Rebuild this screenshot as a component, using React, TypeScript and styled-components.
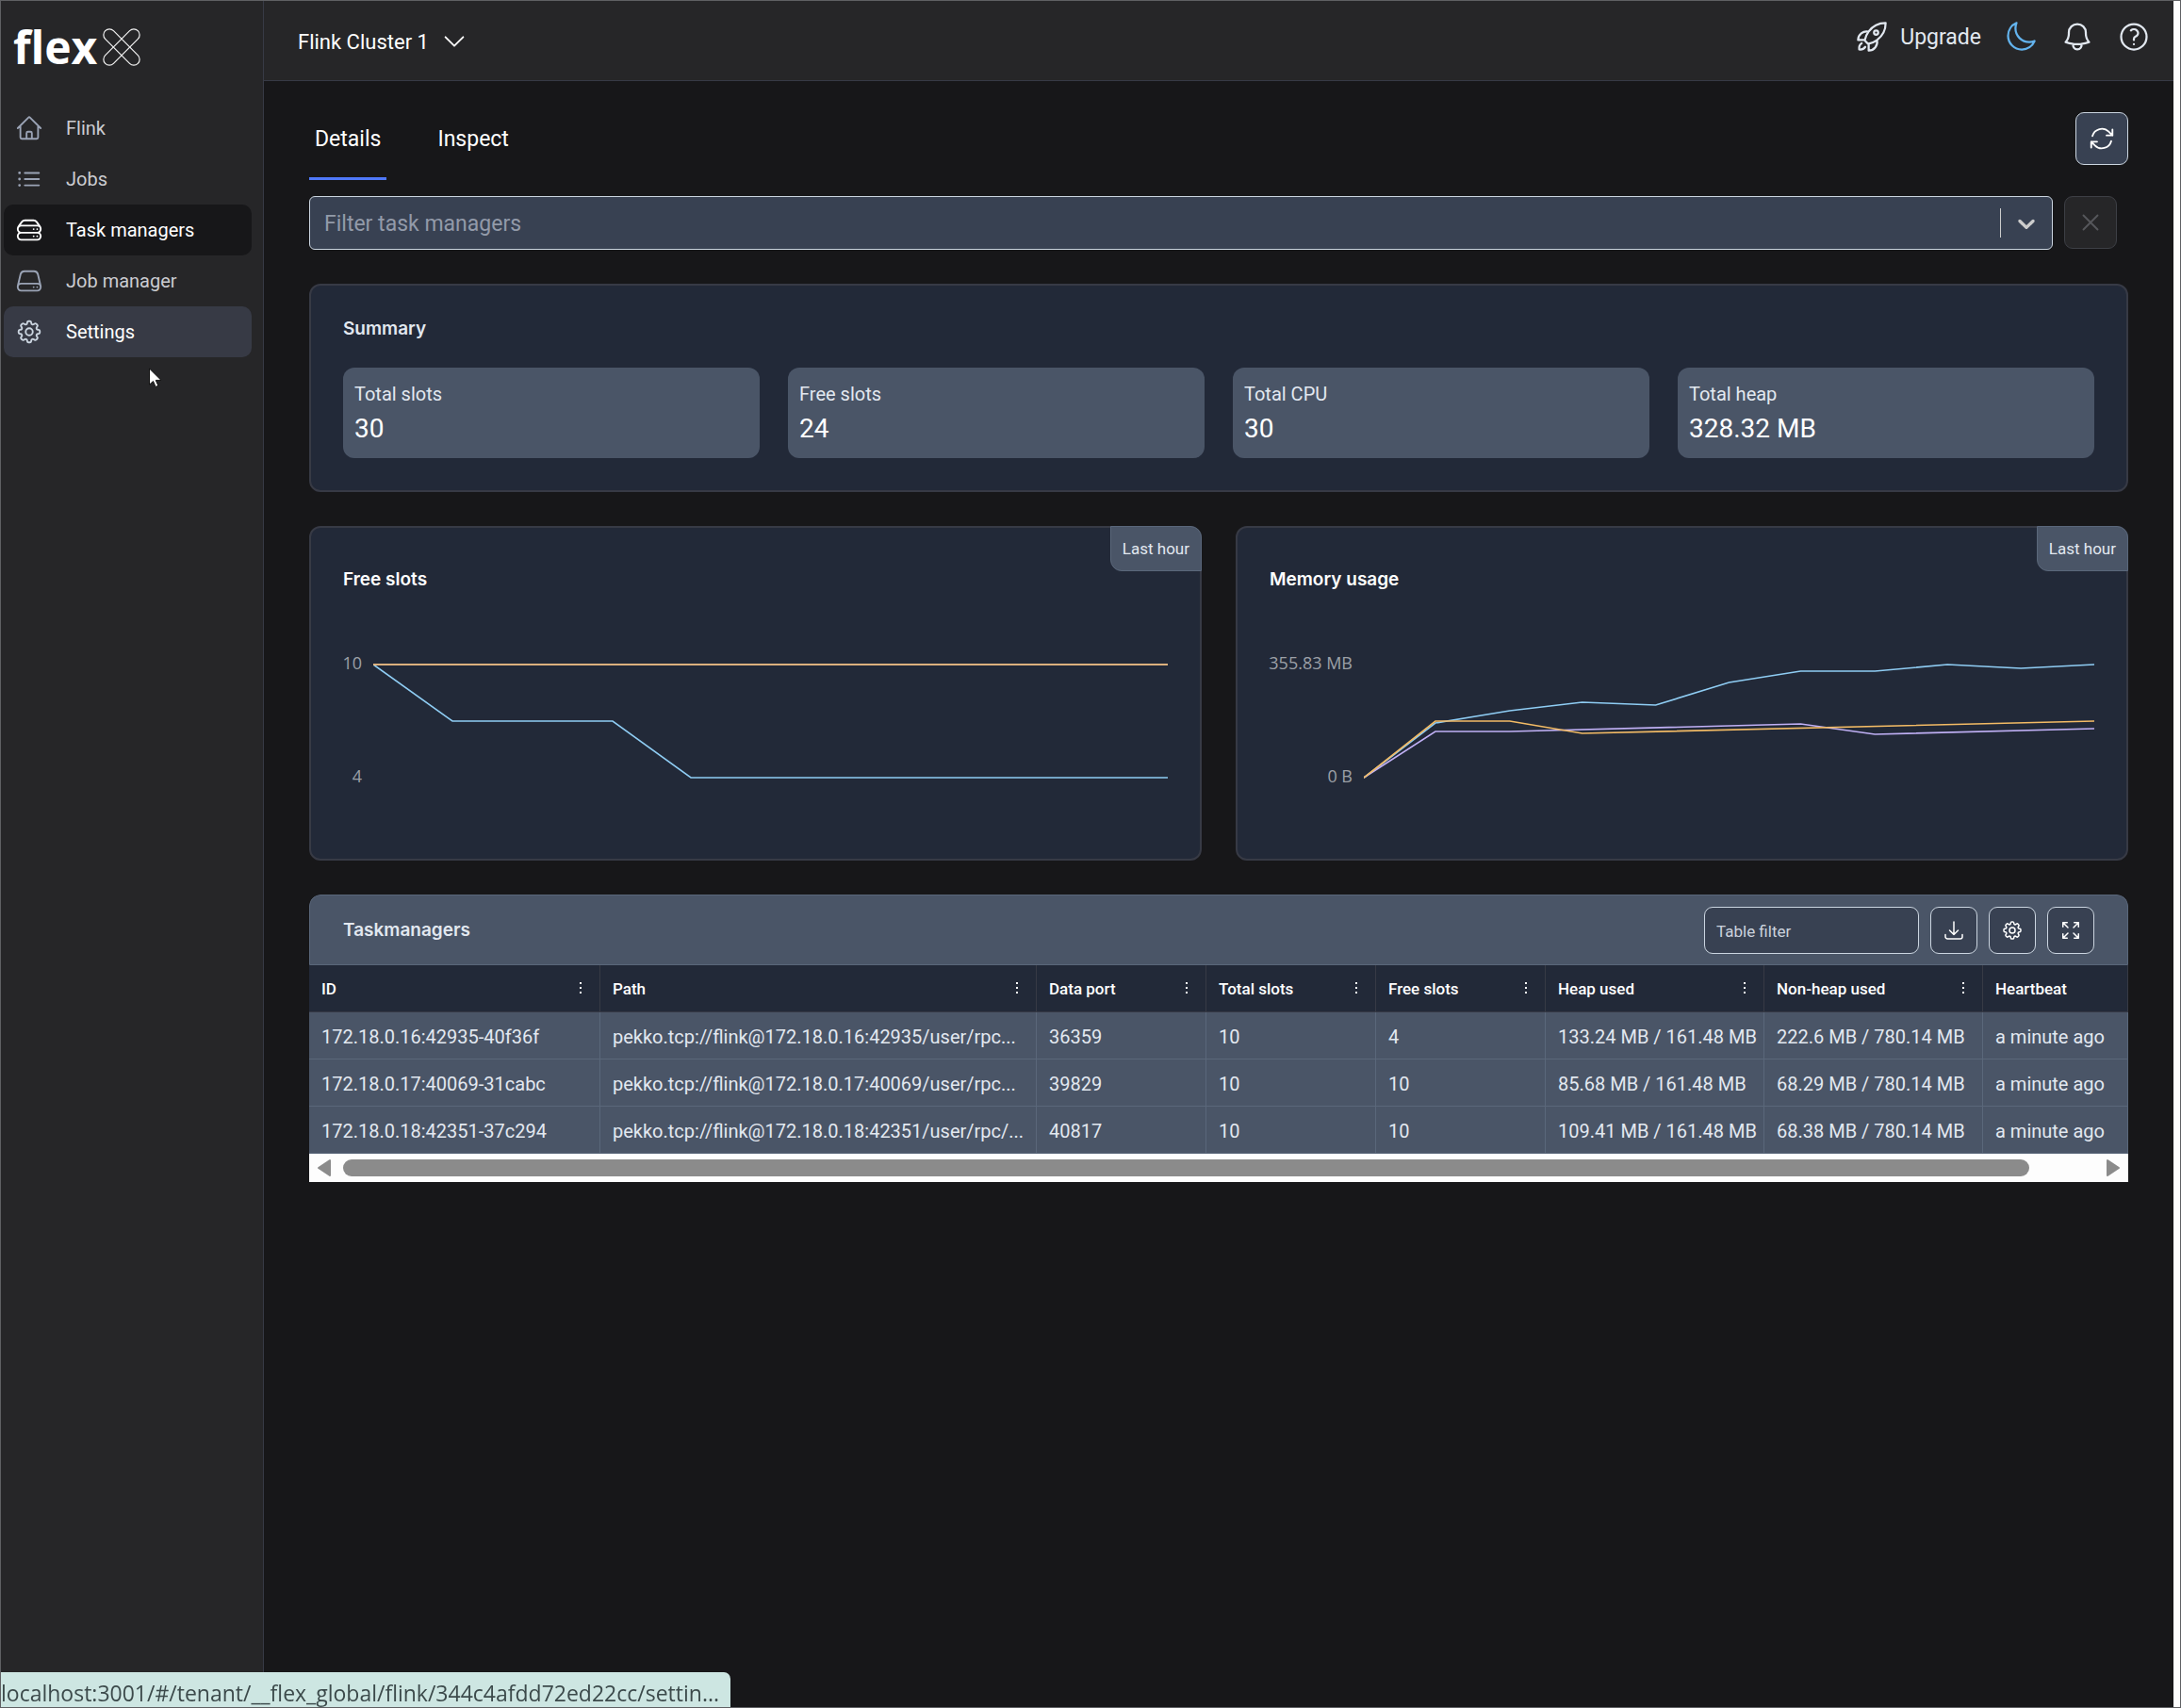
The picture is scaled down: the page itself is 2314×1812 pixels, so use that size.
import React, { useState } from "react";
import styled, { createGlobalStyle, css } from "styled-components";
import {
  HiOutlineHome,
  HiOutlineListBullet,
  HiOutlineServerStack,
  HiOutlineServer,
  HiOutlineCog8Tooth,
  HiOutlineRocketLaunch,
  HiOutlineMoon,
  HiOutlineBell,
  HiOutlineQuestionMarkCircle,
  HiOutlineArrowPath,
  HiOutlineArrowDownTray,
  HiOutlineArrowsPointingOut,
  HiOutlineChevronDown,
  HiOutlineXMark,
} from "react-icons/hi2";

const color = {
  frame: "#5f6063",
  page: "#171719",
  chrome: "#262628",
  hover: "#373a45",
  line: "#373a45",
  card: "#222938",
  tile: "#4a5567",
  tileLine: "#5a677a",
  control: "#384152",
  controlLine: "#cbd5e0",
  text: "#e2e8f0",
  muted: "#cbccd1",
  accent: "#4f78f8",
  blue: "#8fcdf4",
  purple: "#c0b0f5",
  orange: "#f3bb65",
};

const uiFont = `Roboto, "Liberation Sans", sans-serif`;
const titleFont = `Inter, "Open Sans", sans-serif`;
const plainFont = `"Open Sans", "Noto Sans", sans-serif`;

const GlobalStyle = createGlobalStyle`
  *, *::before, *::after { box-sizing: border-box; }
  body { margin: 0; background: ${color.page}; color: #fff; font-family: ${uiFont}; }
  button, input { font: inherit; color: inherit; }
  h2, dl, dd { margin: 0; }
`;

const Window = styled.div`
  display: grid;
  grid-template-columns: 279px minmax(0, 1fr) 7px;
  min-height: 100vh;
  border: 1px solid ${color.frame};
`;

const ScrollGutter = styled.div`
  background: #fdfdfd;
`;

/* Sidebar */

const Sidebar = styled.aside`
  background: ${color.chrome};
  border-right: 1px solid ${color.line};
`;

const Logo = styled.a`
  display: flex;
  align-items: center;
  gap: 6px;
  height: 98px;
  padding: 0 0 0 13px;
  color: #fff;
  text-decoration: none;
`;

const LogoWord = styled.span`
  font: 700 48px/60px "Open Sans", sans-serif;
`;

const NavList = styled.nav`
  display: flex;
  flex-direction: column;
  padding: 10px 12px 0 3px;
`;

const NavItem = styled.a<{ $state?: "active" | "hover" }>`
  display: flex;
  align-items: center;
  gap: 24px;
  height: 54px;
  padding: 0 12px;
  border-radius: 10px;
  color: ${color.muted};
  font-size: 20px;
  text-decoration: none;
  svg { width: 30px; height: 30px; color: #9aa3b5; }
  ${(p) => p.$state === "active" && css`
    background: ${color.page};
    color: #fff;
    svg { color: #fff; }
  `}
  ${(p) => p.$state === "hover" && css`
    background: ${color.hover};
    color: #fff;
    svg { color: ${color.controlLine}; }
  `}
`;

/* Top bar */

const Column = styled.div`
  display: flex;
  flex-direction: column;
  background: ${color.page};
`;

const TopBar = styled.header`
  display: flex;
  align-items: center;
  justify-content: space-between;
  height: 85px;
  padding: 2px 24px 0 36px;
  background: ${color.chrome};
  border-bottom: 1px solid ${color.line};
`;

const PlainButton = styled.button<{ $size?: number; $tint?: string }>`
  display: inline-flex;
  align-items: center;
  gap: 12px;
  padding: 0;
  border: 0;
  background: none;
  color: ${(p) => p.$tint || "#fff"};
  font-size: ${(p) => p.$size || 23}px;
`;

const TopActions = styled.div`
  display: flex;
  align-items: center;
  gap: 24px;
  padding-bottom: 10px;
  svg { width: 36px; height: 36px; }
`;

/* Page body */

const Main = styled.main`
  display: flex;
  flex-direction: column;
  gap: 36px;
  padding: 33px 48px 48px;
`;

const Controls = styled.div`
  display: flex;
  flex-direction: column;
  gap: 17px;
`;

const TabRow = styled.div`
  display: flex;
  justify-content: space-between;
  align-items: flex-start;
`;

const Tabs = styled.div`
  display: flex;
  gap: 48px;
`;

const Tab = styled.button<{ $active?: boolean }>`
  height: 72px;
  padding: 0 6px 12px;
  border: 0;
  border-bottom: 3px solid ${(p) => (p.$active ? color.accent : "transparent")};
  background: none;
  font-size: 23px;
`;

const SquareButton = styled.button<{ $size: number; $quiet?: boolean }>`
  display: inline-flex;
  align-items: center;
  justify-content: center;
  flex: none;
  width: ${(p) => p.$size}px;
  height: ${(p) => p.$size}px;
  padding: 0;
  border: 1px solid ${(p) => (p.$quiet ? "#3d3f45" : color.controlLine)};
  border-radius: 9px;
  background: ${(p) => (p.$quiet ? color.chrome : color.control)};
  color: ${(p) => (p.$quiet ? "#56575b" : "#fff")};
`;

const FilterRow = styled.div`
  display: flex;
  gap: 12px;
  padding-right: 12px;
`;

const Combo = styled.div`
  display: flex;
  align-items: center;
  flex: 1;
  height: 57px;
  border: 1px solid ${color.controlLine};
  border-radius: 6px;
  background: ${color.control};
`;

const ComboInput = styled.input`
  flex: 1;
  min-width: 0;
  height: 100%;
  padding: 2px 15px 0;
  border: 0;
  outline: 0;
  background: none;
  font-size: 23px;
  &::placeholder { color: #929aa9; opacity: 1; }
`;

const ComboToggle = styled.button`
  display: flex;
  align-items: center;
  justify-content: center;
  width: 55px;
  height: 31px;
  padding: 0;
  border: 0;
  border-left: 1px solid #ccc;
  background: none;
  color: #ccc;
`;

const Card = styled.section`
  position: relative;
  padding: 34px;
  border: 2px solid ${color.line};
  border-radius: 12px;
  background: ${color.card};
`;

const CardTitle = styled.h2<{ $bright?: boolean }>`
  font: 600 19px/24px ${titleFont};
  color: ${(p) => (p.$bright ? "#fff" : color.text)};
`;

const Tiles = styled.dl`
  display: grid;
  grid-template-columns: repeat(4, minmax(0, 1fr));
  gap: 30px;
  margin-top: 29px;
`;

const Tile = styled.div`
  height: 96px;
  padding: 15px 12px;
  border-radius: 12px;
  background: ${color.tile};
`;

const TileLabel = styled.dt`
  font-size: 20px;
  line-height: 26px;
  color: ${color.text};
`;

const TileValue = styled.dd`
  font-size: 28px;
  line-height: 48px;
`;

const Charts = styled.div`
  display: grid;
  grid-template-columns: repeat(2, minmax(0, 1fr));
  gap: 36px;
`;

const ChartPanel = styled(Card)`
  padding-top: 43px;
`;

const RangeBadge = styled.span`
  position: absolute;
  top: -2px;
  right: -2px;
  padding: 0 12px;
  border: 1px solid ${color.tileLine};
  border-radius: 0 12px 0 12px;
  background: ${color.tile};
  color: ${color.text};
  font-size: 17px;
  line-height: 46px;
`;

const Plot = styled.div<{ $axis: number }>`
  display: grid;
  grid-template-columns: ${(p) => p.$axis}px minmax(0, 1fr);
  column-gap: 12px;
  height: 124px;
  margin: 76px 0 50px;
`;

const Axis = styled.div`
  display: flex;
  flex-direction: column;
  justify-content: space-between;
  align-items: flex-end;
  margin: -10px 0 -6px;
  color: #9ca0a7;
  font: 18px/20px ${plainFont};
  white-space: nowrap;
`;

const Lines = styled.svg`
  display: block;
  width: 100%;
  height: 124px;
  polyline { fill: none; stroke-width: 1.6; vector-effect: non-scaling-stroke; }
`;

/* Table */

const TablePanel = styled.section`
  border-radius: 12px 12px 0 0;
  overflow: hidden;
`;

const TableBar = styled.div`
  display: flex;
  align-items: center;
  justify-content: space-between;
  height: 75px;
  padding: 0 35px;
  border: 1px solid ${color.tileLine};
  border-radius: 12px 12px 0 0;
  background: ${color.tile};
`;

const TableTools = styled.div`
  display: flex;
  gap: 12px;
`;

const TableFilter = styled.input`
  width: 228px;
  height: 50px;
  padding: 2px 12px 0;
  border: 1px solid ${color.controlLine};
  border-radius: 9px;
  background: ${color.control};
  font-size: 17px;
  &::placeholder { color: #cbd2dd; opacity: 1; }
`;

const Grid = styled.table`
  width: 100%;
  table-layout: fixed;
  border-collapse: separate;
  border-spacing: 0;
`;

const HeadCell = styled.th`
  height: 50px;
  padding: 0 12px 0 13px;
  border-right: 1px solid ${color.line};
  border-bottom: 1px solid ${color.line};
  background: ${color.card};
  font-size: 17px;
  font-weight: 500;
  text-align: left;
`;

const HeadContent = styled.div`
  display: flex;
  align-items: center;
  justify-content: space-between;
`;

const MenuButton = styled.button`
  display: flex;
  padding: 0 6px;
  border: 0;
  background: none;
`;

const Cell = styled.td`
  height: 50px;
  padding: 2px 0 0 13px;
  border-right: 1px solid ${color.tileLine};
  border-bottom: 1px solid ${color.tileLine};
  background: ${color.tile};
  color: ${color.text};
  font-size: 20px;
  white-space: nowrap;
`;

const ScrollBar = styled.div`
  display: flex;
  align-items: center;
  gap: 12px;
  height: 30px;
  padding: 0 8px;
  background: #fdfdfd;
  color: #8b8b8b;
`;

const ScrollTrack = styled.div`
  display: flex;
  flex: 1;
  height: 18px;
`;

const ScrollThumb = styled.div`
  width: calc(100% - 69px);
  border-radius: 9px;
  background: #8b8b8b;
`;

/* Browser overlays */

const StatusBubble = styled.div`
  position: fixed;
  left: 1px;
  bottom: 1px;
  height: 37px;
  padding: 4px 12px 0 0;
  border-radius: 0 7px 0 0;
  background: #cde6e2;
  color: #3c4a4b;
  font: 23px/36px ${plainFont};
  white-space: nowrap;
`;

const Pointer = styled.svg`
  position: fixed;
  left: 157px;
  top: 390px;
`;

const navigation = [
  { label: "Flink", icon: HiOutlineHome },
  { label: "Jobs", icon: HiOutlineListBullet },
  { label: "Task managers", icon: HiOutlineServerStack, state: "active" as const },
  { label: "Job manager", icon: HiOutlineServer },
  { label: "Settings", icon: HiOutlineCog8Tooth, state: "hover" as const },
];

const summary = [
  ["Total slots", "30"],
  ["Free slots", "24"],
  ["Total CPU", "30"],
  ["Total heap", "328.32 MB"],
];

const slotSeries = [
  { stroke: color.blue, points: "0,2 84,62 254,62 337,122 843,122" },
  { stroke: color.purple, points: "0,2 843,2" },
  { stroke: color.orange, points: "0,2 843,2" },
];

const memorySeries = [
  { stroke: color.blue, points: "0,122 76,64 155,51 232,42 310,45 388,21 464,9 543,9 620,2 698,6 776,2" },
  { stroke: color.purple, points: "0,122 76,73 155,73 464,65 543,76 776,70" },
  { stroke: color.orange, points: "0,122 76,62 155,62 232,75 776,62" },
];

const columns = [
  { title: "ID", width: 309 },
  { title: "Path", width: 463 },
  { title: "Data port", width: 180 },
  { title: "Total slots", width: 180 },
  { title: "Free slots", width: 180 },
  { title: "Heap used", width: 232 },
  { title: "Non-heap used", width: 232 },
  { title: "Heartbeat" },
];

const rows = [
  ["172.18.0.16:42935-40f36f", "pekko.tcp://flink@172.18.0.16:42935/user/rpc...", "36359", "10", "4", "133.24 MB / 161.48 MB", "222.6 MB / 780.14 MB", "a minute ago"],
  ["172.18.0.17:40069-31cabc", "pekko.tcp://flink@172.18.0.17:40069/user/rpc...", "39829", "10", "10", "85.68 MB / 161.48 MB", "68.29 MB / 780.14 MB", "a minute ago"],
  ["172.18.0.18:42351-37c294", "pekko.tcp://flink@172.18.0.18:42351/user/rpc/...", "40817", "10", "10", "109.41 MB / 161.48 MB", "68.38 MB / 780.14 MB", "a minute ago"],
];

function LogoMark() {
  return (
    <svg width="40" height="40" viewBox="-20 -20 40 40" fill="none" stroke="#f2f2f2" strokeWidth="1.2" aria-hidden="true">
      <rect x="-24.5" y="-6.2" width="49" height="12.4" rx="6.2" transform="rotate(45)" />
      <rect x="-24.5" y="-6.2" width="49" height="12.4" rx="6.2" transform="rotate(-45)" />
    </svg>
  );
}

function SelectChevron() {
  return (
    <svg width="30" height="30" viewBox="0 0 20 20" fill="currentColor" aria-hidden="true">
      <path d="M4.516 7.548c0.436-0.446 1.043-0.481 1.576 0l3.908 3.747 3.908-3.747c0.533-0.481 1.141-0.446 1.574 0 0.436 0.445 0.408 1.197 0 1.615-0.406 0.418-4.695 4.502-4.695 4.502-0.217 0.223-0.502 0.335-0.787 0.335s-0.57-0.112-0.789-0.335c0 0-4.287-4.084-4.695-4.502s-0.436-1.17 0-1.615z" />
    </svg>
  );
}

function ScrollArrow({ right }: { right?: boolean }) {
  return (
    <svg width="16" height="20" viewBox="0 0 16 20" fill="currentColor" stroke="currentColor" strokeWidth="2" strokeLinejoin="round" aria-hidden="true">
      <path d={right ? "M2 2v16L14 10z" : "M14 2v16L2 10z"} />
    </svg>
  );
}

type ChartProps = {
  title: string;
  axis: number;
  width: number;
  labels: string[];
  series: { stroke: string; points: string }[];
};

function ChartCard({ title, axis, width, labels, series }: ChartProps) {
  return (
    <ChartPanel>
      <RangeBadge>Last hour</RangeBadge>
      <CardTitle $bright>{title}</CardTitle>
      <Plot $axis={axis}>
        <Axis>
          {labels.map((label) => (
            <span key={label}>{label}</span>
          ))}
        </Axis>
        <Lines viewBox={`0 0 ${width} 124`} preserveAspectRatio="none" aria-label={title}>
          {series.map((line) => (
            <polyline key={line.stroke} stroke={line.stroke} points={line.points} />
          ))}
        </Lines>
      </Plot>
    </ChartPanel>
  );
}

export default function App() {
  const [tab, setTab] = useState("Details");
  return (
    <>
      <GlobalStyle />
      <Window>
        <Sidebar>
          <Logo href="#home">
            <LogoWord>flex</LogoWord>
            <LogoMark />
          </Logo>
          <NavList>
            {navigation.map(({ label, icon: Icon, state }) => (
              <NavItem key={label} href="#nav" $state={state}>
                <Icon />
                {label}
              </NavItem>
            ))}
          </NavList>
        </Sidebar>

        <Column>
          <TopBar>
            <PlainButton $size={22}>
              Flink Cluster 1
              <HiOutlineChevronDown size={30} />
            </PlainButton>
            <TopActions>
              <PlainButton $tint={color.text}>
                <HiOutlineRocketLaunch />
                Upgrade
              </PlainButton>
              <PlainButton $tint="#63b3ed" aria-label="Dark mode"><HiOutlineMoon /></PlainButton>
              <PlainButton $tint={color.text} aria-label="Notifications"><HiOutlineBell /></PlainButton>
              <PlainButton $tint={color.text} aria-label="Help"><HiOutlineQuestionMarkCircle /></PlainButton>
            </TopActions>
          </TopBar>

          <Main>
            <Controls>
              <TabRow>
                <Tabs>
                  {["Details", "Inspect"].map((name) => (
                    <Tab key={name} $active={tab === name} onClick={() => setTab(name)}>{name}</Tab>
                  ))}
                </Tabs>
                <SquareButton $size={56} aria-label="Refresh"><HiOutlineArrowPath size={30} /></SquareButton>
              </TabRow>
              <FilterRow>
                <Combo>
                  <ComboInput aria-label="Filter task managers" placeholder="Filter task managers" />
                  <ComboToggle aria-label="Show options"><SelectChevron /></ComboToggle>
                </Combo>
                <SquareButton $size={56} $quiet aria-label="Clear filter"><HiOutlineXMark size={30} /></SquareButton>
              </FilterRow>
            </Controls>

            <Card>
              <CardTitle>Summary</CardTitle>
              <Tiles>
                {summary.map(([label, value]) => (
                  <Tile key={label}>
                    <TileLabel>{label}</TileLabel>
                    <TileValue>{value}</TileValue>
                  </Tile>
                ))}
              </Tiles>
            </Card>

            <Charts>
              <ChartCard title="Free slots" axis={20} width={843} labels={["10", "4"]} series={slotSeries} />
              <ChartCard title="Memory usage" axis={88} width={776} labels={["355.83 MB", "0 B"]} series={memorySeries} />
            </Charts>

            <TablePanel>
              <TableBar>
                <CardTitle>Taskmanagers</CardTitle>
                <TableTools>
                  <TableFilter aria-label="Table filter" placeholder="Table filter" />
                  <SquareButton $size={50} aria-label="Download"><HiOutlineArrowDownTray size={24} /></SquareButton>
                  <SquareButton $size={50} aria-label="Table settings"><HiOutlineCog8Tooth size={24} /></SquareButton>
                  <SquareButton $size={50} aria-label="Full screen"><HiOutlineArrowsPointingOut size={24} /></SquareButton>
                </TableTools>
              </TableBar>
              <Grid>
                <colgroup>
                  {columns.map((c) => (
                    <col key={c.title} width={c.width} />
                  ))}
                </colgroup>
                <thead>
                  <tr>
                    {columns.map((c) => (
                      <HeadCell key={c.title} scope="col">
                        <HeadContent>
                          {c.title}
                          {c.width && (
                            <MenuButton aria-label={`${c.title} menu`}>
                              <svg width="3" height="13" fill="#fff" aria-hidden="true">
                                <path d="M0 0h2v2H0zM0 5h2v2H0zM0 10h2v2H0z" />
                              </svg>
                            </MenuButton>
                          )}
                        </HeadContent>
                      </HeadCell>
                    ))}
                  </tr>
                </thead>
                <tbody>
                  {rows.map((row) => (
                    <tr key={row[0]}>
                      {row.map((value, i) => (
                        <Cell key={columns[i].title}>{value}</Cell>
                      ))}
                    </tr>
                  ))}
                </tbody>
              </Grid>
              <ScrollBar>
                <ScrollArrow />
                <ScrollTrack><ScrollThumb /></ScrollTrack>
                <ScrollArrow right />
              </ScrollBar>
            </TablePanel>
          </Main>
        </Column>
        <ScrollGutter />
      </Window>
      <StatusBubble>localhost:3001/#/tenant/__flex_global/flink/344c4afdd72ed22cc/settin...</StatusBubble>
      <Pointer width="16" height="22" viewBox="0 0 16 22" fill="#fff" stroke="#111" strokeWidth="1" aria-hidden="true">
        <path d="M1.500 1v17l4-3.600 2.600 6 2.800-1.200-2.600-5.800H14z" />
      </Pointer>
    </>
  );
}
